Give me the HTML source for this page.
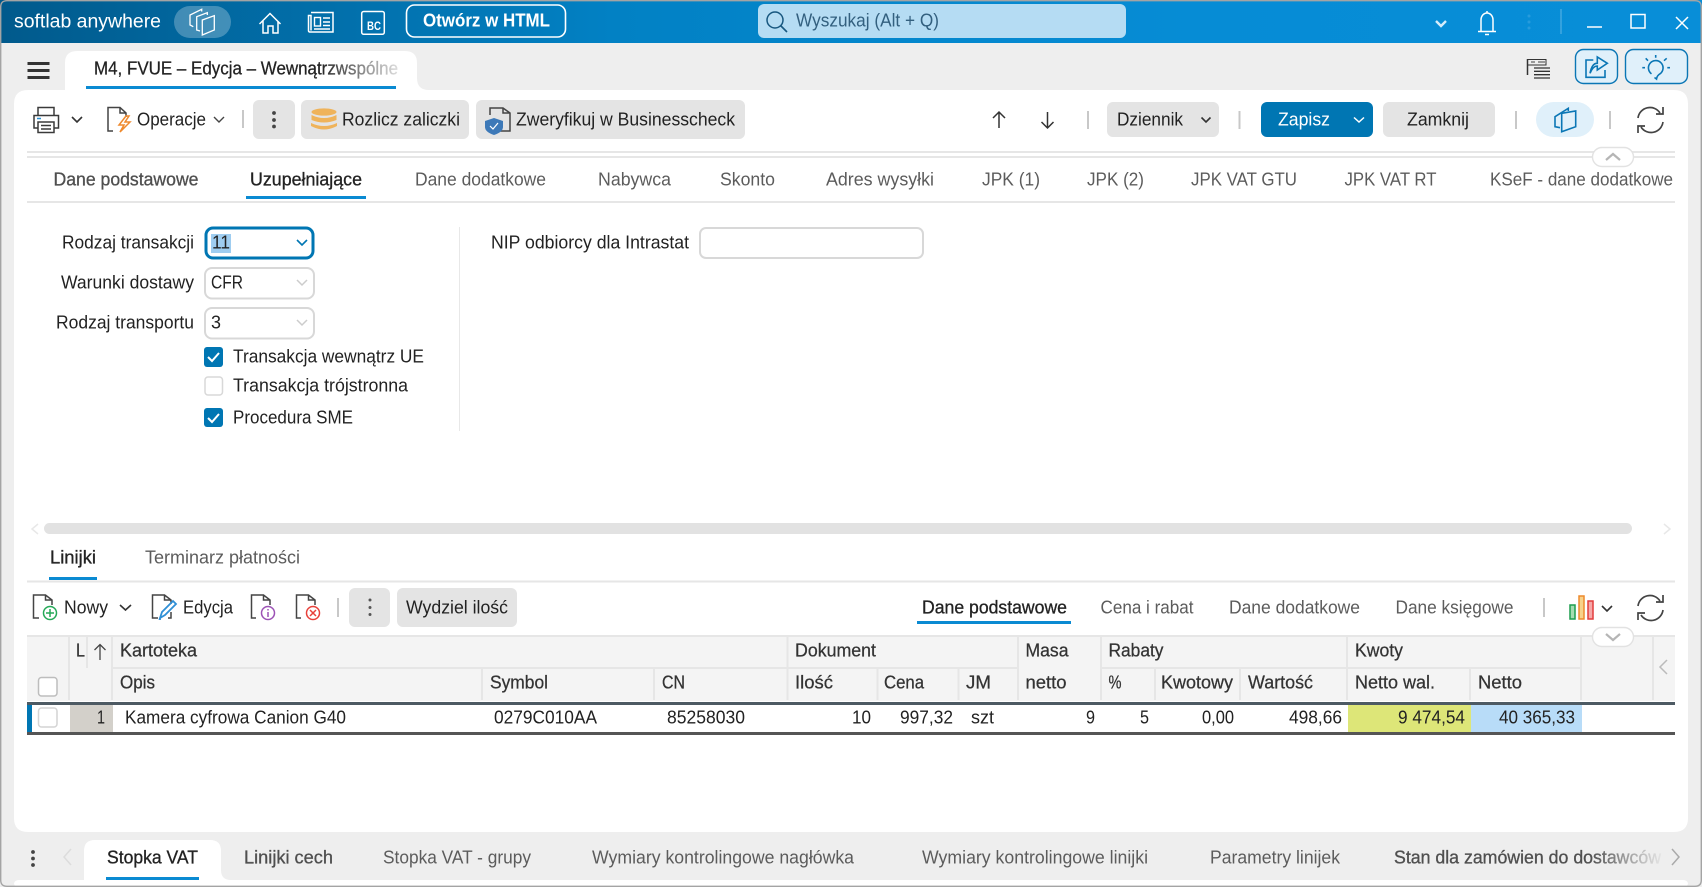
<!DOCTYPE html>
<html lang="pl"><head><meta charset="utf-8"><title>M4, FVUE</title>
<style>
html,body{margin:0;padding:0;width:1702px;height:887px;overflow:hidden;background:#fff}
svg{display:block}
text{font-family:"Liberation Sans",sans-serif;font-size:18px;fill:#222;white-space:pre;transform:translateY(-.5px)}
.g{fill:#5c5c5c}
.m{fill:#4f4f4f;stroke:#4f4f4f;stroke-width:.3px}
.d{fill:#222;stroke:#222;stroke-width:.3px}
.h{fill:#333;stroke:#333;stroke-width:.25px}
.w{fill:#fff}
.ic{fill:none;stroke:#444;stroke-width:1.5}
.wi{fill:none;stroke:#fff;stroke-width:1.5}
.bi{fill:none;stroke:#0a76b5;stroke-width:1.6}
.ch{fill:none;stroke:#333;stroke-width:1.6}
.l{stroke:#e6e6e6;stroke-width:2}
.s{stroke:#c8c8c8;stroke-width:2}
.b{fill:#e4e4e4}
</style></head><body>
<svg width="1702" height="887" viewBox="0 0 1702 887" xmlns="http://www.w3.org/2000/svg">
<defs>
<linearGradient id="tb" x1="0" x2="1"><stop offset="0" stop-color="#015a8c"/><stop offset=".36" stop-color="#0281c4"/><stop offset=".7" stop-color="#068cd5"/><stop offset="1" stop-color="#088ed8"/></linearGradient>
<linearGradient id="f1" gradientUnits="userSpaceOnUse" x1="320" x2="398" y1="0" y2="0"><stop offset="0" stop-color="#222"/><stop offset="1" stop-color="#ddd"/></linearGradient>
<linearGradient id="f2" gradientUnits="userSpaceOnUse" x1="1590" x2="1662" y1="0" y2="0"><stop offset="0" stop-color="#4f4f4f"/><stop offset="1" stop-color="#e6e6e6"/></linearGradient>
</defs>

<rect width="1702" height="887" fill="#eee"/>
<rect width="1702" height="43" fill="url(#tb)"/>

<!-- title bar -->
<text x="14" y="28" textLength="147" lengthAdjust="spacingAndGlyphs" class="w" style="font-size:19px">softlab anywhere</text>
<rect x="174" y="6" width="57" height="32" rx="16" fill="#fff" fill-opacity=".26"/>
<g class="wi" style="stroke-width:1.3"><path d="M202.300 20 L214.300 15.700 V30 L202.300 35 Z"/><path d="M200 31 L196.700 30 V16.700 L207.300 12.700 V15"/><path d="M193.300 26.700 L190 25 V15 L201.700 9.300 V11.500"/></g>
<path class="wi" d="M259.500 24 L270 13.500 L280.500 24 M263 21 V33 H268 V26 H273 V33 H278 V21"/>
<g class="wi"><path d="M311 12.500 H333 V32 H309.500 A1.500 1.500 0 0 1 308.500 30.500 V15.500 H311 V30.500"/><rect x="314.500" y="17.500" width="6" height="8.500" style="stroke-width:1.400"/><path d="M323 18 H330 M323 22 H330 M323 25.500 H330 M314 29 H330" style="stroke-width:1.400"/></g>
<rect class="wi" x="361.700" y="11.500" width="22.600" height="22.800" rx="2"/>
<text x="367" y="30.700" textLength="14" lengthAdjust="spacingAndGlyphs" class="w" style="font-size:12px;font-weight:700">BC</text>
<rect x="406.500" y="5" width="159" height="32" rx="8" fill="none" stroke="#fff" stroke-width="1.600"/>
<text x="423" y="27" textLength="127" lengthAdjust="spacingAndGlyphs" class="w" style="font-weight:700">Otwórz w HTML</text>
<rect x="758" y="4" width="368" height="34" rx="6" fill="#b5dcf3"/>
<circle cx="775" cy="20" r="8" fill="none" stroke="#17577f" stroke-width="1.500"/><path d="M781 26 L787 32" stroke="#17577f" stroke-width="1.600"/>
<text x="796" y="27" textLength="143" lengthAdjust="spacingAndGlyphs" style="fill:#33607f">Wyszukaj (Alt + Q)</text>
<path d="M1436 21 L1441 26 L1446 21" fill="none" stroke="#d5ecfa" stroke-width="2.400"/>
<path class="wi" d="M1481 31 V20 A6 7 0 0 1 1493 20 V31 M1478 31.500 H1496 M1485 34.500 H1489 M1487 11 V13"/>
<g fill="#fff" fill-opacity=".13"><circle cx="1529" cy="16" r="1.500"/><circle cx="1529" cy="22" r="1.500"/><circle cx="1529" cy="28" r="1.500"/></g>
<path d="M1561 9 V34" stroke="#fff" stroke-opacity=".18" stroke-width="2"/>
<path class="wi" d="M1587 27 H1602"/><rect class="wi" x="1631" y="14.500" width="14" height="13.500"/><path class="wi" d="M1676 17 L1688 29 M1688 17 L1676 29"/>

<!-- second bar -->
<rect x="27.500" y="62" width="22" height="3" fill="#333"/><rect x="27.500" y="69" width="22" height="3" fill="#333"/><rect x="27.500" y="76" width="22" height="3" fill="#333"/>
<path d="M65 92 V63 Q65 51 77 51 H405 Q417 51 417 63 V78 Q417 90 429 90 V92 Z" fill="#fff"/>
<text x="94" y="75" textLength="304" lengthAdjust="spacingAndGlyphs" style="fill:url(#f1);stroke:url(#f1);stroke-width:.25px">M4, FVUE – Edycja – Wewnątrzwspólne</text>
<rect x="86" y="86" width="310" height="3" fill="#0a8ad2"/>

<g fill="none" stroke="#333"><path d="M1527.500 59 V75" stroke-width="1.500"/><path d="M1527.500 59.500 H1546 V65 H1527.500" stroke-width="1"/><path d="M1531 62 H1535 M1538 62 H1545" stroke="#999" stroke-width="2"/><path d="M1534 68 H1550 M1534 71.300 H1550 M1534 74.700 H1550 M1534 78 H1550" stroke-width="1.300"/></g>
<rect x="1575.500" y="49.500" width="42" height="34" rx="8" fill="#e0f0fa" stroke="#0a76b5" stroke-width="1.400"/>
<path class="bi" d="M1593.300 60 H1586 V77.300 H1605 V70 M1590 73.300 Q1592 63 1597.300 63.300 V57 L1607.300 63.300 L1597.300 70 V66 Q1593 66 1590 73.300"/>
<rect x="1625.500" y="49.500" width="62" height="34" rx="8" fill="#e0f0fa" stroke="#0a76b5" stroke-width="1.400"/>
<path class="bi" d="M1651.500 73.800 A7.300 7.300 0 1 1 1660 73.800 Q1657 75.500 1656.500 79 L1654.500 77.500"/><path class="bi" d="M1642.300 67.700 H1645 M1667.300 67.700 H1670 M1645.700 58.300 L1648 60.700 M1666.700 58.300 L1664 60.700 M1655.700 55 V57.700"/>

<!-- card -->
<path d="M14 104 Q14 90 28 90 H1674 Q1688 90 1688 104 V818 Q1688 832 1674 832 H28 Q14 832 14 818 Z" fill="#fff"/>

<!-- toolbar -->
<g class="ic" style="stroke:#3a3a3a"><path d="M38 115 V107.500 H54 V115"/><path d="M38 128 H34 V115.500 H58.500 V128 H54"/><rect x="38" y="122" width="16" height="10.500"/><path d="M41 125.500 H51 M41 129 H51"/></g>
<path d="M37 118.500 H41" stroke="#2a8fd0" stroke-width="1.500"/>
<path class="ch" d="M72 117 L77 122 L82 117"/>
<path class="ic" d="M113 131 H108 V107.500 H120 L126 113 V117 M120 107.500 V113 H126"/>
<path d="M126 116 L119 125 H124 L120 132 L130 122 H125 L129 116 Z" fill="none" stroke="#ef8a2e" stroke-width="1.500"/>
<text x="137" y="126" textLength="69" lengthAdjust="spacingAndGlyphs">Operacje</text>
<path class="ch" style="stroke:#444;stroke-width:1.400" d="M214 117 L219 122 L224 117"/>
<path class="s" d="M243 110 V128"/>
<rect class="b" x="253" y="100" width="42" height="39" rx="6"/>
<circle cx="274" cy="113" r="1.900" fill="#444"/><circle cx="274" cy="120" r="1.900" fill="#444"/><circle cx="274" cy="126.500" r="1.900" fill="#444"/>
<rect class="b" x="301" y="100" width="168" height="39" rx="6"/>
<g fill="#efb35a"><ellipse cx="324" cy="112" rx="12.500" ry="3.600"/><path d="M311.500 115 Q324 121 336.500 115 V120 Q324 125 311.500 120 Z"/><path d="M311 123 Q324 129 337 123 V126 Q324 133 311 126 Z"/></g>
<text x="342" y="126" textLength="118" lengthAdjust="spacingAndGlyphs">Rozlicz zaliczki</text>
<rect class="b" x="476" y="100" width="269" height="39" rx="6"/>
<path class="ic" d="M490 115 V108 H503 L510 113 V131 H500 M503 108 V113 H510"/>
<path d="M485 121 L494 118 L503 121 V127 Q503 132 494 135 Q485 132 485 127 Z" fill="#3d79b8"/><path d="M490 126 L493 129 L498 123" fill="none" stroke="#fff" stroke-width="1.200"/>
<text x="516" y="126" textLength="219" lengthAdjust="spacingAndGlyphs">Zweryfikuj w Businesscheck</text>

<path class="ic" style="stroke:#333" d="M999 128 V112 M993 118 L999 112 L1005 118 M1047.500 112 V128 M1041.500 122 L1047.500 128 L1053.500 122"/>
<path class="s" d="M1088 111 V129"/>
<rect class="b" x="1107" y="102" width="112" height="35" rx="6"/>
<text x="1117" y="126" textLength="66" lengthAdjust="spacingAndGlyphs">Dziennik</text>
<path class="ch" d="M1201.500 117.500 L1206 122 L1210.500 117.500"/>
<path class="s" d="M1239.500 111 V129"/>
<rect x="1261" y="102" width="112" height="35" rx="6" fill="#0076b3"/>
<text x="1278" y="126" textLength="52" lengthAdjust="spacingAndGlyphs" class="w">Zapisz</text>
<path class="wi" d="M1354 117.500 L1359 122 L1364 117.500"/>
<rect class="b" x="1383" y="102" width="112" height="35" rx="6"/>
<text x="1407" y="126" textLength="62" lengthAdjust="spacingAndGlyphs">Zamknij</text>
<path class="s" d="M1516 111 V129"/>
<rect x="1536" y="102" width="58" height="35" rx="17.500" fill="#e0f0fa"/>
<g class="bi"><path d="M1561.700 113.300 L1575.700 111 V126.700 L1561.700 131.700 Z"/><path d="M1560 127.700 L1555 126.700 V116.700 L1568.300 108.300 V111"/></g>
<path class="ic" style="stroke:#444;stroke-width:1.700" d="M1638 118 A12 12 0 0 1 1660 113 M1663 107 V114 H1656 M1663 122 A12 12 0 0 1 1641 127 M1638 133 V126 H1645"/>
<path class="s" d="M1610 111 V129"/>

<path class="l" d="M27 152 H1675 M27 157 H1675"/>
<rect x="1592.500" y="147.500" width="41" height="19" rx="9.500" fill="#fff" stroke="#e2e2e2" stroke-width="1.400"/>
<path d="M1606 160 L1613 154 L1620 160" fill="none" stroke="#b5b5b5" stroke-width="2.200"/>

<!-- main tabs -->
<text x="53.500" y="186" textLength="145" lengthAdjust="spacingAndGlyphs" class="m">Dane podstawowe</text>
<text x="250" y="186" textLength="112" lengthAdjust="spacingAndGlyphs" class="d">Uzupełniające</text>
<rect x="246" y="196" width="120" height="3" fill="#0a8ad2"/>
<text x="415" y="186" textLength="131" lengthAdjust="spacingAndGlyphs" class="g">Dane dodatkowe</text>
<text x="598" y="186" textLength="73" lengthAdjust="spacingAndGlyphs" class="g">Nabywca</text>
<text x="720" y="186" textLength="55" lengthAdjust="spacingAndGlyphs" class="g">Skonto</text>
<text x="826" y="186" textLength="108" lengthAdjust="spacingAndGlyphs" class="g">Adres wysyłki</text>
<text x="982" y="186" textLength="58" lengthAdjust="spacingAndGlyphs" class="g">JPK (1)</text>
<text x="1087" y="186" textLength="57" lengthAdjust="spacingAndGlyphs" class="g">JPK (2)</text>
<text x="1191" y="186" textLength="106" lengthAdjust="spacingAndGlyphs" class="g">JPK VAT GTU</text>
<text x="1344.500" y="186" textLength="92" lengthAdjust="spacingAndGlyphs" class="g">JPK VAT RT</text>
<text x="1490" y="186" textLength="183" lengthAdjust="spacingAndGlyphs" class="g">KSeF - dane dodatkowe</text>
<path class="l" d="M27 202 H1675"/>

<!-- form -->
<text x="62" y="249" textLength="132" lengthAdjust="spacingAndGlyphs">Rodzaj transakcji</text>
<rect x="206" y="228" width="107" height="30" rx="7" fill="#fff" stroke="#0076b3" stroke-width="3"/>
<rect x="211" y="234" width="20" height="19" fill="#9fcdf0"/>
<text x="212" y="249" textLength="18" lengthAdjust="spacingAndGlyphs">11</text>
<path d="M297 240 L302 245 L307 240" fill="none" stroke="#0076b3" stroke-width="1.600"/>
<text x="61" y="289" textLength="133" lengthAdjust="spacingAndGlyphs">Warunki dostawy</text>
<rect x="205" y="268" width="109" height="30.500" rx="7" fill="#fff" stroke="#d8d8d8" stroke-width="2"/>
<text x="211" y="289" textLength="32" lengthAdjust="spacingAndGlyphs">CFR</text>
<path d="M297 280 L302 285 L307 280" fill="none" stroke="#ccc" stroke-width="1.500"/>
<text x="56" y="329" textLength="138" lengthAdjust="spacingAndGlyphs">Rodzaj transportu</text>
<rect x="205" y="308" width="109" height="30.500" rx="7" fill="#fff" stroke="#d8d8d8" stroke-width="2"/>
<text x="211" y="329" textLength="10" lengthAdjust="spacingAndGlyphs">3</text>
<path d="M297 320 L302 325 L307 320" fill="none" stroke="#ccc" stroke-width="1.500"/>

<rect x="204" y="347" width="19" height="20" rx="3" fill="#0076b3"/>
<path d="M208 357 L212 361 L219 353" class="wi" style="stroke-width:2"/>
<text x="233" y="363" textLength="191" lengthAdjust="spacingAndGlyphs">Transakcja wewnątrz UE</text>
<rect x="205" y="377" width="17.500" height="18" rx="3" fill="#fff" stroke="#d8d8d8" stroke-width="1.500"/>
<text x="233" y="392" textLength="175" lengthAdjust="spacingAndGlyphs">Transakcja trójstronna</text>
<rect x="204" y="408" width="19" height="19" rx="3" fill="#0076b3"/>
<path d="M208 418 L212 422 L219 414" class="wi" style="stroke-width:2"/>
<text x="233" y="424" textLength="120" lengthAdjust="spacingAndGlyphs">Procedura SME</text>
<path d="M459.500 227 V431" stroke="#e8e8e8" stroke-width="1"/>
<text x="491" y="249" textLength="198" lengthAdjust="spacingAndGlyphs">NIP odbiorcy dla Intrastat</text>
<rect x="700" y="228" width="223" height="30" rx="6" fill="#fff" stroke="#d8d8d8" stroke-width="2"/>

<!-- scrollbar -->
<rect x="44" y="523" width="1588" height="11" rx="5.500" fill="#e2e2e2"/>
<path d="M38 524 L32 529 L38 534 M1664 524 L1670 529 L1664 534" fill="none" stroke="#e8e8e8" stroke-width="1.500"/>

<!-- lines tabs -->
<text x="50" y="564" textLength="46" lengthAdjust="spacingAndGlyphs" class="d">Linijki</text>
<rect x="49" y="577" width="48" height="3" fill="#0a8ad2"/>
<text x="145" y="564" textLength="155" lengthAdjust="spacingAndGlyphs" class="g">Terminarz płatności</text>
<path class="l" d="M27 581.500 H1675"/>

<!-- toolbar 2 -->
<path class="ic" d="M39 618 H33.500 V595 H45.500 L52 600 V605 M45.500 595 V600 H52"/>
<circle cx="50" cy="613" r="6.500" fill="#fff" stroke="#24a957" stroke-width="1.500"/><path d="M50 609 V617 M46 613 H54" stroke="#24a957" stroke-width="1.500"/>
<text x="64" y="614" textLength="44" lengthAdjust="spacingAndGlyphs">Nowy</text>
<path class="ch" d="M120 605 L125.500 610 L131 605"/>
<path class="ic" d="M158 618 H152.500 V595 H164.500 L171 600 V604 M164.500 595 V600 H171 M171 612 V618 H168"/>
<path d="M160 618 L162 612 L173 601 L176 604 L165 615 Z M160 618 V620" fill="none" stroke="#2f8fd6" stroke-width="1.800"/>
<text x="183" y="614" textLength="50" lengthAdjust="spacingAndGlyphs">Edycja</text>
<path class="ic" d="M256 618 H251.500 V595 H263.500 L270 600 V605 M263.500 595 V600 H270"/>
<circle cx="268" cy="613" r="6.500" fill="#fff" stroke="#9c52b5" stroke-width="1.500"/><path d="M268 612 V617 M268 609 V610.500" stroke="#9c52b5" stroke-width="1.500"/>
<path class="ic" d="M301 618 H296.500 V595 H308.500 L315 600 V605 M308.500 595 V600 H315"/>
<circle cx="313" cy="613" r="6.500" fill="#fff" stroke="#e8403a" stroke-width="1.500"/><path d="M310 610 L316 616 M316 610 L310 616" stroke="#e8403a" stroke-width="1.500"/>
<path class="s" d="M338 598 V617"/>
<rect class="b" x="349" y="588" width="41" height="39" rx="6"/>
<circle cx="370" cy="600" r="1.500" fill="#555"/><circle cx="370" cy="607.500" r="1.500" fill="#555"/><circle cx="370" cy="614.500" r="1.500" fill="#555"/>
<rect class="b" x="397" y="588" width="120" height="39" rx="6"/>
<text x="406" y="614" textLength="102" lengthAdjust="spacingAndGlyphs">Wydziel ilość</text>

<text x="922" y="614" textLength="145" lengthAdjust="spacingAndGlyphs" class="d">Dane podstawowe</text>
<rect x="917" y="621" width="154" height="3" fill="#0a8ad2"/>
<text x="1100.500" y="614" textLength="93" lengthAdjust="spacingAndGlyphs" class="g">Cena i rabat</text>
<text x="1229" y="614" textLength="131" lengthAdjust="spacingAndGlyphs" class="g">Dane dodatkowe</text>
<text x="1395.500" y="614" textLength="118" lengthAdjust="spacingAndGlyphs" class="g">Dane księgowe</text>
<path class="s" d="M1544 598 V617"/>
<rect x="1570" y="605" width="5" height="14" fill="#a5dcb2" stroke="#1d9e4f" stroke-width="1.500"/>
<rect x="1579" y="596" width="5" height="23" fill="#f7d28a" stroke="#ee8a2c" stroke-width="1.500"/>
<rect x="1588" y="601" width="5" height="18" fill="#f5a8a8" stroke="#e23d3d" stroke-width="1.500"/>
<path class="ch" d="M1602 606 L1607 611 L1612 606"/>
<path class="ic" style="stroke:#444;stroke-width:1.700" d="M1638 606 A12 12 0 0 1 1660 601 M1663 595 V602 H1656 M1663 610 A12 12 0 0 1 1641 615 M1638 620 V613 H1645"/>

<!-- table -->
<rect x="27" y="636" width="1648" height="65" fill="#f4f4f4"/>
<path class="l" d="M27 636 H1675 M112 668 H1018 M1101 668 H1581 M69 636 V700 M87 636 V668 M112 636 V700 M787.500 636 V700 M1018 636 V700 M1101 636 V700 M1347 636 V700 M1581 636 V700 M1653 636 V700 M482 668 V700 M654 668 V700 M877.500 668 V700 M958.500 668 V700 M1155 668 V700 M1240 668 V700 M1470 668 V700"/>
<rect x="1592.500" y="627.500" width="41" height="19" rx="9.500" fill="#fff" stroke="#e2e2e2" stroke-width="1.400"/>
<path d="M1606 634 L1613 640 L1620 634" fill="none" stroke="#b5b5b5" stroke-width="2.200"/>
<path d="M1667 660 L1660 667 L1667 674" fill="none" stroke="#bbb" stroke-width="1.500"/>

<rect x="38.500" y="677.500" width="18.500" height="18.500" rx="3" fill="#fff" stroke="#bdbdbd" stroke-width="1.500"/>
<text x="76" y="657" textLength="9" lengthAdjust="spacingAndGlyphs" class="h">L</text>
<path d="M100 660 V645 M94.500 650 L100 644.500 L105.500 650" fill="none" stroke="#444" stroke-width="1.300"/>
<text x="120" y="657" textLength="77" lengthAdjust="spacingAndGlyphs" class="h">Kartoteka</text>
<text x="120" y="689" textLength="35" lengthAdjust="spacingAndGlyphs" class="h">Opis</text>
<text x="490" y="689" textLength="58" lengthAdjust="spacingAndGlyphs" class="h">Symbol</text>
<text x="662" y="689" textLength="23" lengthAdjust="spacingAndGlyphs" class="h">CN</text>
<text x="795" y="657" textLength="81" lengthAdjust="spacingAndGlyphs" class="h">Dokument</text>
<text x="795" y="689" textLength="38" lengthAdjust="spacingAndGlyphs" class="h">Ilość</text>
<text x="884" y="689" textLength="40" lengthAdjust="spacingAndGlyphs" class="h">Cena</text>
<text x="966" y="689" textLength="25" lengthAdjust="spacingAndGlyphs" class="h">JM</text>
<text x="1025.500" y="657" textLength="43" lengthAdjust="spacingAndGlyphs" class="h">Masa</text>
<text x="1025.500" y="689" textLength="41" lengthAdjust="spacingAndGlyphs" class="h">netto</text>
<text x="1108.500" y="657" textLength="55" lengthAdjust="spacingAndGlyphs" class="h">Rabaty</text>
<text x="1108.500" y="689" textLength="13" lengthAdjust="spacingAndGlyphs" class="h">%</text>
<text x="1161" y="689" textLength="72" lengthAdjust="spacingAndGlyphs" class="h">Kwotowy</text>
<text x="1248" y="689" textLength="65" lengthAdjust="spacingAndGlyphs" class="h">Wartość</text>
<text x="1355" y="657" textLength="48" lengthAdjust="spacingAndGlyphs" class="h">Kwoty</text>
<text x="1355" y="689" textLength="80" lengthAdjust="spacingAndGlyphs" class="h">Netto wal.</text>
<text x="1478" y="689" textLength="44" lengthAdjust="spacingAndGlyphs" class="h">Netto</text>

<rect x="27" y="702" width="1648" height="3" fill="#4d5a63"/>
<rect x="27" y="705" width="5" height="27" fill="#0076b3"/>
<rect x="70" y="705" width="43" height="27" fill="#d3d0ca"/>
<rect x="1348" y="705" width="123" height="27" fill="#dde678"/>
<rect x="1471" y="705" width="111" height="27" fill="#b8dcf8"/>
<rect x="27" y="732" width="1648" height="3" fill="#555"/>
<rect x="38.500" y="708" width="18.500" height="19" rx="3" fill="#fff" stroke="#d4d4d4" stroke-width="1.500"/>
<text x="97" y="724" textLength="8" lengthAdjust="spacingAndGlyphs">1</text>
<text x="125" y="724" textLength="221" lengthAdjust="spacingAndGlyphs">Kamera cyfrowa Canion G40</text>
<text x="494" y="724" textLength="103" lengthAdjust="spacingAndGlyphs">0279C010AA</text>
<text x="667" y="724" textLength="78" lengthAdjust="spacingAndGlyphs">85258030</text>
<text x="852" y="724" textLength="19" lengthAdjust="spacingAndGlyphs">10</text>
<text x="900" y="724" textLength="53" lengthAdjust="spacingAndGlyphs">997,32</text>
<text x="971" y="724" textLength="23" lengthAdjust="spacingAndGlyphs">szt</text>
<text x="1086" y="724" textLength="9" lengthAdjust="spacingAndGlyphs">9</text>
<text x="1140" y="724" textLength="9" lengthAdjust="spacingAndGlyphs">5</text>
<text x="1202" y="724" textLength="32" lengthAdjust="spacingAndGlyphs">0,00</text>
<text x="1289" y="724" textLength="53" lengthAdjust="spacingAndGlyphs">498,66</text>
<text x="1398" y="724" textLength="67" lengthAdjust="spacingAndGlyphs">9 474,54</text>
<text x="1499" y="724" textLength="76" lengthAdjust="spacingAndGlyphs">40 365,33</text>

<!-- bottom -->
<rect x="14" y="880" width="1674" height="7" rx="5" fill="#fff"/>
<circle cx="33" cy="852" r="1.900" fill="#444"/><circle cx="33" cy="858.500" r="1.900" fill="#444"/><circle cx="33" cy="865" r="1.900" fill="#444"/>
<path d="M71 849 L64 857 L71 865" fill="none" stroke="#dcdcdc" stroke-width="1.500"/>
<path d="M84 881 V851 Q84 840 95 840 H210 Q221 840 221 851 V870 Q221 880 231 880 V881 Z" fill="#fff"/>
<text x="107" y="864" textLength="91" lengthAdjust="spacingAndGlyphs" class="d">Stopka VAT</text>
<rect x="106" y="877" width="93" height="3" fill="#0a8ad2"/>
<text x="244" y="864" textLength="89" lengthAdjust="spacingAndGlyphs" class="m">Linijki cech</text>
<text x="383" y="864" textLength="148" lengthAdjust="spacingAndGlyphs" class="g">Stopka VAT - grupy</text>
<text x="592" y="864" textLength="262" lengthAdjust="spacingAndGlyphs" class="g">Wymiary kontrolingowe nagłówka</text>
<text x="922" y="864" textLength="226" lengthAdjust="spacingAndGlyphs" class="g">Wymiary kontrolingowe linijki</text>
<text x="1210" y="864" textLength="130" lengthAdjust="spacingAndGlyphs" class="g">Parametry linijek</text>
<text x="1394" y="864" textLength="267" lengthAdjust="spacingAndGlyphs" style="fill:url(#f2);stroke:url(#f2);stroke-width:.3px">Stan dla zamówien do dostawców</text>
<path d="M1672 849 L1679 857 L1672 865" fill="none" stroke="#aaa" stroke-width="1.500"/>

<!-- window frame -->
<path d="M7 .7 H1695 Q1701.300 .7 1701.300 7 V880 Q1701.300 886.300 1695 886.300 H7 Q.7 886.300 .7 880 V7 Q.7 .7 7 .7 Z" fill="none" stroke="#a4a4a4" stroke-width="1.400"/>
</svg>
</body></html>
